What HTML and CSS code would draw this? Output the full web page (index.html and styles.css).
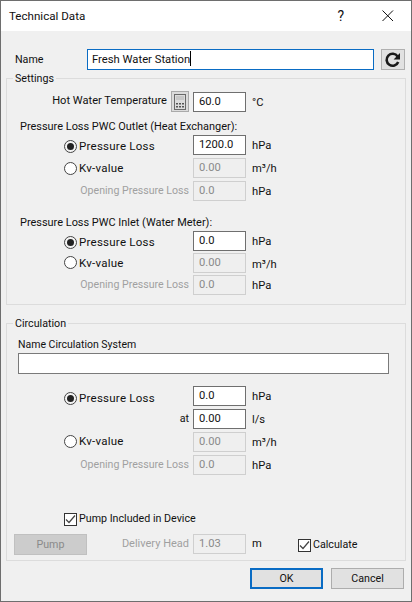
FILE: index.html
```html
<!DOCTYPE html>
<html lang="en">
<head>
<meta charset="utf-8">
<title>Technical Data</title>
<link rel="stylesheet" href="styles.css">
</head>
<body>
<div class="window">
  <header class="titlebar">
    <span class="title">Technical Data</span>
    <span class="help">?</span>
    <svg class="close" width="12" height="12" viewBox="0 0 12 12"><path d="M.5.5l10.5 10.5M11 .5L.5 11" fill="none" stroke="#111" stroke-width="1"/></svg>
  </header>
  <main class="content">
    <div class="name-row">
      <label class="name-label">Name</label>
      <div class="input name-input focus">Fresh Water Station<span class="caret"></span></div>
      <button class="icon-btn reload" type="button" aria-label="Refresh">
        <svg width="18" height="18" viewBox="0 0 18 18"><path d="M13.6 5.4A6 6 0 1 0 14.2 11" fill="none" stroke="#1a1a1a" stroke-width="2.6"/><path d="M16 2v6.4H9.6z" fill="#1a1a1a"/></svg>
      </button>
    </div>

    <fieldset class="group settings">
      <legend>Settings</legend>
      <div class="field">
        <div class="lead end hot"><span class="hot-text">Hot Water Temperature</span>
          <button class="calc" type="button" aria-label="Calculator">
            <svg width="14" height="18" viewBox="0 0 14 18"><rect x="1.5" y="1.5" width="11" height="15" fill="none" stroke="#6a6a6a"/><rect x="3" y="3" width="8" height="4" fill="#c8c8c8"/><path d="M3 10h2v1.6H3zM6 10h2v1.6H6zM9 10h2v1.6H9zM3 13h2v1.6H3zM6 13h2v1.6H6zM9 13h2v1.6H9z" fill="#555"/></svg>
          </button>
        </div>
        <div class="input dark">60.0</div><span class="unit">°C</span>
      </div>

      <h3 class="sub outlet">Pressure Loss PWC Outlet (Heat Exchanger):</h3>
      <div class="field tight"><label class="lead opt low"><span class="radio on"></span>Pressure Loss</label><div class="input dark">1200.0</div><span class="unit">hPa</span></div>
      <div class="field next"><label class="lead opt"><span class="radio"></span>Kv-value</label><div class="input off">0.00</div><span class="unit">m³/h</span></div>
      <div class="field next"><div class="lead end muted">Opening Pressure Loss</div><div class="input off">0.0</div><span class="unit">hPa</span></div>

      <h3 class="sub inlet">Pressure Loss PWC Inlet (Water Meter):</h3>
      <div class="field tight"><label class="lead opt low"><span class="radio on"></span>Pressure Loss</label><div class="input dark">0.0</div><span class="unit">hPa</span></div>
      <div class="field next-sm"><label class="lead opt"><span class="radio"></span>Kv-value</label><div class="input off">0.00</div><span class="unit unit-low">m³/h</span></div>
      <div class="field next"><div class="lead end muted">Opening Pressure Loss</div><div class="input off">0.0</div><span class="unit">hPa</span></div>
    </fieldset>

    <fieldset class="group circulation">
      <legend>Circulation</legend>
      <div class="sys-label">Name Circulation System</div>
      <div class="input sys-input"></div>
      <div class="field circ-first"><label class="lead opt lower"><span class="radio on"></span>Pressure Loss</label><div class="input dark">0.0</div><span class="unit">hPa</span></div>
      <div class="field next"><div class="lead end">at</div><div class="input dark">0.00</div><span class="unit">l/s</span></div>
      <div class="field next"><label class="lead opt high"><span class="radio"></span>Kv-value</label><div class="input off">0.00</div><span class="unit">m³/h</span></div>
      <div class="field next"><div class="lead end muted">Opening Pressure Loss</div><div class="input off">0.0</div><span class="unit">hPa</span></div>
      <label class="check-row"><span class="check"><svg width="11" height="11" viewBox="0 0 11 11"><path d="M1 5.5l3 3 6-7" fill="none" stroke="#444" stroke-width="1.2"/></svg></span>Pump Included in Device</label>
      <div class="pump-row">
        <button class="btn pump" type="button" disabled>Pump</button>
        <div class="head muted">Delivery Head</div>
        <div class="input off">1.03</div>
        <span class="unit short">m</span>
        <label class="calc-check"><span class="check"><svg width="11" height="11" viewBox="0 0 11 11"><path d="M1 5.5l3 3 6-7" fill="none" stroke="#444" stroke-width="1.2"/></svg></span>Calculate</label>
      </div>
    </fieldset>

    <footer class="actions">
      <button class="btn default" type="button">OK</button>
      <button class="btn" type="button">Cancel</button>
    </footer>
  </main>
</div>
</body>
</html>
```

FILE: styles.css
```css
* { box-sizing: border-box; }
html, body { margin: 0; padding: 0; }
body {
  width: 412px;
  height: 602px;
  overflow: hidden;
  font-family: Roboto, "Noto Sans", sans-serif;
  font-size: 10.7px;
  line-height: 16px;
  color: #111;
}
.window {
  width: 412px;
  height: 602px;
  border: 1px solid #6e6e6e;
  background: #f0f0f0;
  display: flex;
  flex-direction: column;
}
.titlebar {
  height: 30px;
  background: #fff;
  display: flex;
  align-items: center;
  padding-left: 8px;
  flex: none;
}
.title { font-size: 11.6px; flex: 1; }
.help { font-size: 14px; margin-right: 38px; }
.close { margin-right: 17px; }
.content { padding: 18px 6px 0 5px; flex: 1; }
.name-row { display: flex; align-items: center; height: 21px; }
.name-label { width: 81px; padding-left: 9px; flex: none; }
.input {
  width: 53px;
  height: 20px;
  border: 1px solid #9a9a9a;
  background: #fff;
  padding: 0 0 0 5px;
  font-size: 11.2px;
  line-height: 18px;
  flex: none;
}
.input.dark { border-color: #6f6f6f; }
.input.off { background: #efefef; border-color: #cfcfcf; color: #8a8a8a; }
.input.focus { border-color: #0a6cc4; }
.name-input { width: 287px; height: 21px; line-height: 19px; padding-left: 4px; font-size: 11.25px; }
.caret { display: inline-block; width: 1px; height: 15px; background: #000; vertical-align: -3px; }
.icon-btn.reload {
  width: 24px;
  height: 21px;
  margin-left: 7px;
  border: 1px solid #b0b0b0;
  background: #e1e1e1;
  padding: 0;
  display: flex;
  align-items: center;
  justify-content: center;
}
.group {
  margin: 0;
  padding: 0;
  border: 1px solid #dcdcdc;
  width: 400px;
  min-width: 0;
}
.group legend {
  margin-left: 6px;
  padding: 2px 2px 0;
  line-height: 16px;
}
.settings { margin-top: -1px; height: 236px; padding-top: 4px; }
.circulation { margin-top: 9px; height: 247px; }
.field {
  display: grid;
  grid-template-columns: 186px 53px auto;
  align-items: center;
  height: 20px;
}
.field .unit { margin-left: 6px; font-size: 11.2px; padding-top: 2px; }
.field .unit-low { padding-top: 5px; }
.lead { display: flex; align-items: center; padding-right: 4px; }
.end { justify-content: flex-end; }
.opt { padding-left: 57px; font-size: 11.5px; letter-spacing: .25px; }
.opt.low { padding-top: 2px; }
.opt.lower { padding-top: 4px; }
.opt.high { padding-bottom: 2px; }
.hot-text { font-size: 11.1px; padding-bottom: 2px; }
.muted { color: #a0a0a0; font-size: 10.6px; }
.unit { line-height: 16px; }
.sub { margin: 0; font-weight: 400; font-size: 10.95px; line-height: 16px; padding-left: 13px; }
.outlet { margin-top: 8px; }
.inlet { margin-top: 14px; }
.tight { margin-top: 0; }
.next { margin-top: 3px; }
.next-sm { margin-top: 1px; }
.radio {
  width: 13px;
  height: 13px;
  border: 1px solid #444;
  border-radius: 50%;
  background: #fff;
  margin-right: 2px;
  flex: none;
}
.radio.on { display: flex; align-items: center; justify-content: center; background: #f4f4f4; }
.radio.on::after { content: ""; width: 7px; height: 7px; border-radius: 50%; background: #222; }
.calc {
  width: 18px;
  height: 21px;
  margin-left: 4px;
  border: 1px solid #aaa;
  background: #dcdcdc;
  padding: 0;
  display: flex;
  align-items: center;
  justify-content: center;
}
.sys-label { padding-left: 11px; margin-top: 4px; height: 16px; font-size: 10.5px; line-height: 18px; }
.sys-input { width: 371px; height: 21px; margin: 1px 0 0 11px; border-color: #7a7a7a; }
.circ-first { margin-top: 12px; }
.check {
  width: 13px;
  height: 13px;
  border: 1px solid #333;
  background: #fff;
  margin-right: 2px;
  flex: none;
  display: flex;
  align-items: center;
  justify-content: center;
}
.check-row { display: flex; align-items: center; height: 16px; margin: 36px 0 0 57px; }
.pump-row { display: flex; align-items: flex-start; height: 21px; margin-top: 7px; }
.btn {
  width: 73px;
  height: 21px;
  font: inherit;
  color: #111;
  padding: 0;
  border: 1px solid #adadad;
  background: #e1e1e1;
}
.btn.pump { margin-left: 7px; background: #ccc; color: #8a8a8a; border-color: #c0c0c0; }
.head { width: 102px; text-align: right; flex: none; font-size: 11px; padding-top: 2px; }
.pump-row .input { margin-left: 4px; }
.unit.short { margin-left: 6px; width: 46px; flex: none; padding-top: 2px; font-size: 11.2px; }
.calc-check { display: flex; align-items: center; padding-top: 3px; }
.actions { display: flex; gap: 8px; justify-content: flex-end; padding-right: 1px; margin-top: 7px; }
.btn.default { border: 2px solid #0a6cc4; }
```
